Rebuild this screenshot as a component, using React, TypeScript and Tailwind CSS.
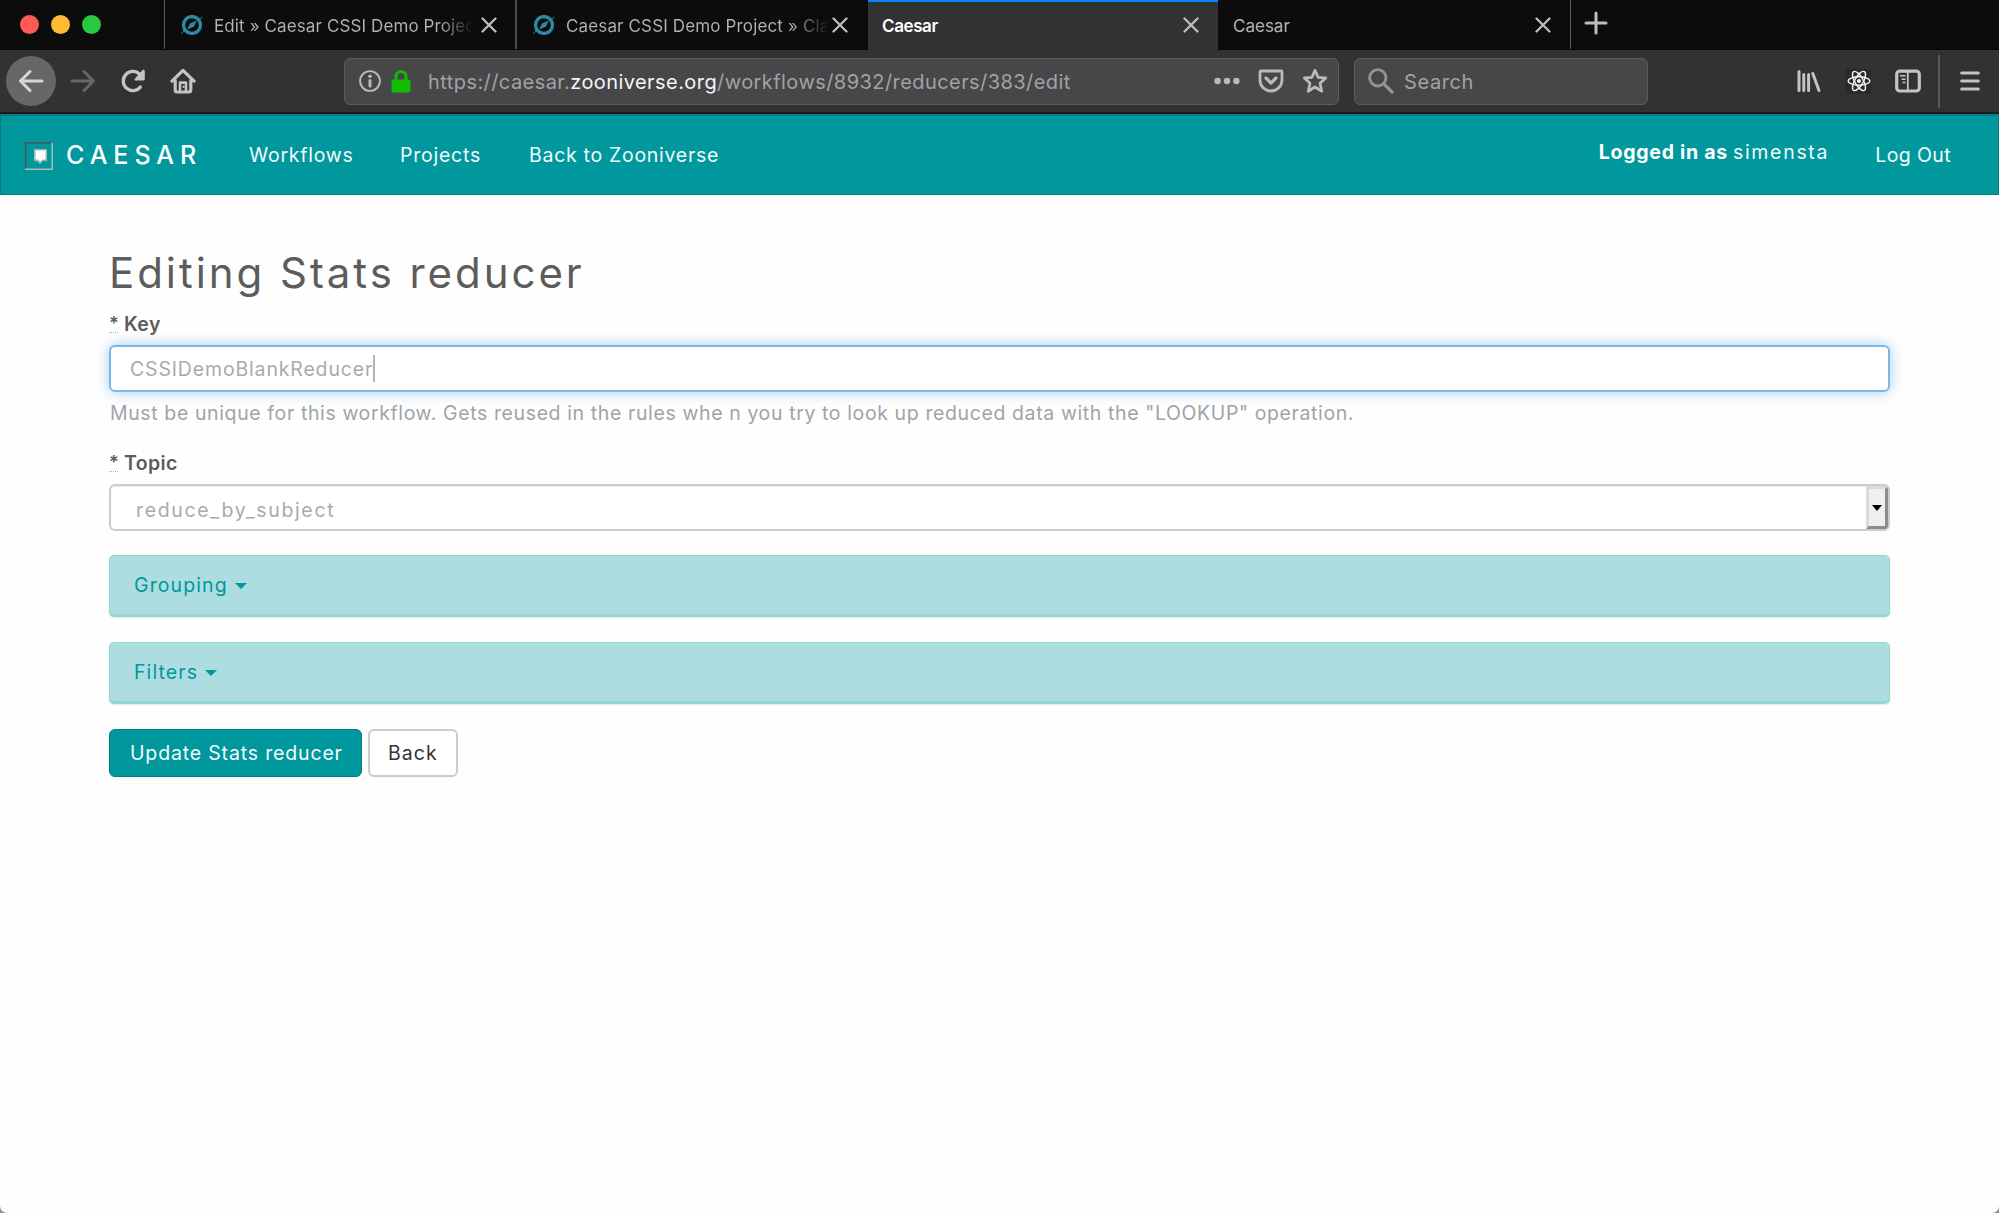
import React from 'react';

const sans = "font-['Inter','Liberation_Sans',sans-serif]";

function Favicon() {
  return (
    <svg width="22" height="22" viewBox="0 0 22 22" className="shrink-0">
      <circle cx="11" cy="11" r="8.5" fill="none" stroke="#2b8ca3" strokeWidth="3.3" />
      <path d="M0.8 19.6 L3 16 M19 5 L21.4 3" stroke="#2b8ca3" strokeWidth="1" />
      <path d="M6 15.5 L9.2 9.2 L16 6.5 L12.8 12.8 Z" fill="#2b8ca3" />
    </svg>
  );
}

function Close() {
  return (
    <svg width="16" height="16" viewBox="0 0 16 16" className="shrink-0">
      <path d="M1.5 1.5 L14.5 14.5 M14.5 1.5 L1.5 14.5" stroke="#bdbdbd" strokeWidth="2.3" strokeLinecap="round" />
    </svg>
  );
}

function TabBar() {
  return (
    <div className="flex h-[50px] items-stretch border-b border-[#060606] bg-[#0c0c0c] text-[17px] leading-[20px]">
      <div className="flex w-[165px] items-start gap-[12px] border-r border-[#5a5a5c] pt-[15px] pl-[20px]">
        <span className="size-[19px] rounded-full bg-[#fe5b54]" />
        <span className="size-[19px] rounded-full bg-[#fdbc30]" />
        <span className="size-[19px] rounded-full bg-[#27c93f]" />
      </div>
      <div className="flex w-[352px] items-center border-r-2 border-[#4c4c4e] pl-[16px]">
        <Favicon />
        <div className="ml-[11px] w-[262px] overflow-hidden whitespace-nowrap bg-[linear-gradient(90deg,#b4b4b4_86%,#0c0c0c_99%)] bg-clip-text pt-[2px] tracking-[0.11px] text-transparent">
          Edit » Caesar CSSI Demo Project
        </div>
        <div className="ml-[5px]"><Close /></div>
      </div>
      <div className="flex w-[351px] items-center pl-[16px]">
        <Favicon />
        <div className="ml-[11px] w-[261px] overflow-hidden whitespace-nowrap bg-[linear-gradient(90deg,#b4b4b4_86%,#0c0c0c_101%)] bg-clip-text pt-[2px] tracking-[0.14px] text-transparent">
          Caesar CSSI Demo Project » Classify
        </div>
        <div className="ml-[5px]"><Close /></div>
      </div>
      <div className="-mb-px flex w-[350px] items-center justify-between border-t-2 border-[#0a84ff] bg-[#323234] pr-[19px] pl-[14px]">
        <span className="font-semibold tracking-[-0.4px] text-white">Caesar</span>
        <div className="pb-[2px]"><Close /></div>
      </div>
      <div className="flex w-[353px] items-center justify-between border-r border-[#5a5a5c] pr-[19px] pl-[15px]">
        <span className="pt-[2px] text-[#b4b4b4]">Caesar</span>
        <Close />
      </div>
      <svg width="24" height="24" viewBox="0 0 24 24" className="mt-[11px] ml-[13px]">
        <path d="M12 2 V22 M2 12 H22" stroke="#bdbdbd" strokeWidth="3" strokeLinecap="round" />
      </svg>
    </div>
  );
}

function Toolbar() {
  return (
    <div className="flex h-[64px] items-center border-b-2 border-[#1c1c1e] bg-[#323234] text-[20px] leading-[24px]">
      <div className="ml-[6px] flex size-[50px] shrink-0 items-center justify-center rounded-full bg-[#676767]">
        <svg width="26" height="24" viewBox="0 0 26 24" fill="none" stroke="#d6d6d6" strokeWidth="3" strokeLinecap="round" strokeLinejoin="round">
          <path d="M24 12 H2.5 M12 2.5 L2.5 12 L12 21.5" />
        </svg>
      </div>
      <svg width="26" height="24" viewBox="0 0 26 24" className="ml-[14px] shrink-0" fill="none" stroke="#67676a" strokeWidth="3" strokeLinecap="round" strokeLinejoin="round">
        <path d="M2 12 H23.5 M14 2.5 L23.5 12 L14 21.5" />
      </svg>
      <svg width="26" height="26" viewBox="0 0 26 26" className="ml-[24px] shrink-0">
        <path d="M20.4 19 A9.6 9.6 0 1 1 19.6 6.2" fill="none" stroke="#c4c4c4" strokeWidth="3.3" strokeLinecap="round" />
        <path d="M22.6 2 Q24.8 1.2 24.8 3.4 V11 Q24.8 12.4 23.4 12.4 H15.6 Q13.6 12.2 15 10.4 Z" fill="#c4c4c4" />
      </svg>
      <svg width="26" height="26" viewBox="0 0 26 26" className="ml-[24px] shrink-0" fill="none" stroke="#c4c4c4" strokeLinecap="round" strokeLinejoin="round">
        <path d="M2 13.2 L13 2.4 L24 13.2" strokeWidth="3.2" />
        <path d="M5.2 12.5 V22 Q5.2 24 7.2 24 H18.8 Q20.8 24 20.8 22 V12.5" strokeWidth="3.2" />
        <path d="M10 24 V14.6 H16 V24" strokeWidth="2.6" />
        <path d="M13.6 18.6 V19" strokeWidth="2" />
      </svg>

      <div className="ml-[148px] flex h-[47px] w-[995px] shrink-0 items-center rounded-[6px] border border-[#5c5c5f] bg-[#474749]">
        <svg width="22" height="22" viewBox="0 0 22 22" className="ml-[14px]">
          <circle cx="11" cy="11" r="9.9" fill="none" stroke="#b9b9ba" strokeWidth="1.9" />
          <circle cx="11" cy="6.2" r="1.8" fill="#b9b9ba" />
          <path d="M11 10.6 V16" stroke="#b9b9ba" strokeWidth="3" strokeLinecap="round" />
        </svg>
        <svg width="20" height="23" viewBox="0 0 20 23" className="ml-[10px]">
          <path d="M5 11 V6.5 A5 5 0 0 1 15 6.5 V11" fill="none" stroke="#12bc00" strokeWidth="3" />
          <rect x="0.5" y="9.5" width="19" height="13" rx="1.8" fill="#12bc00" />
        </svg>
        <div className="ml-[17px] w-[700px] whitespace-nowrap pt-[2px] tracking-[0.43px] text-[#a2a2a3]">
          https://caesar.<span className="text-[#f5f5f5]">zooniverse.org</span>/workflows/8932/reducers/383/edit
        </div>
        <svg width="26" height="8" viewBox="0 0 26 8" className="ml-[86px]" fill="#bababb">
          <circle cx="3.6" cy="4" r="3.2" /><circle cx="13" cy="4" r="3.2" /><circle cx="22.4" cy="4" r="3.2" />
        </svg>
        <svg width="26" height="24" viewBox="0 0 26 24" className="ml-[18px]" fill="none" stroke="#bababb" strokeWidth="2.8" strokeLinecap="round" strokeLinejoin="round">
          <path d="M3 2 H23 Q24 2 24 3 V11 A11 11 0 0 1 2 11 V3 Q2 2 3 2 Z" />
          <path d="M8 9 L13 14 L18 9" strokeWidth="3.2" />
        </svg>
        <svg width="26" height="26" viewBox="0 0 26 26" className="ml-[18px]" fill="none" stroke="#bababb" strokeWidth="2.8" strokeLinejoin="round">
          <path d="M13 2.4 L16.1 9.3 L23.7 10 L18 15.2 L19.8 23.2 L13 19 L6.2 23.2 L8 15.2 L2.3 10 L9.9 9.3 Z" />
        </svg>
      </div>

      <div className="ml-[15px] flex h-[47px] w-[294px] shrink-0 items-center rounded-[6px] border border-[#5c5c5f] bg-[#474749]">
        <svg width="26" height="26" viewBox="0 0 26 26" className="ml-[13px]" fill="none" stroke="#949495" strokeLinecap="round">
          <circle cx="9.8" cy="9.8" r="8.2" strokeWidth="2.8" />
          <path d="M16.4 16.4 L24 24" strokeWidth="3.2" />
        </svg>
        <span className="ml-[10px] pt-[2px] tracking-[0.6px] text-[#a2a2a3]">Search</span>
      </div>

      <svg width="24" height="24" viewBox="0 0 24 24" className="ml-[149px] shrink-0" stroke="#c4c4c4" strokeWidth="3" strokeLinecap="round">
        <path d="M2 2.5 V21.5 M6.8 5.5 V21.5 M11.6 5.5 V21.5 M15.8 4.5 L22 21.5" />
      </svg>
      <div className="ml-[25px] flex size-[25px] shrink-0 items-center justify-center bg-[#29292b]">
        <svg width="24" height="24" viewBox="0 0 24 24" fill="none" stroke="#f2f2f2" strokeWidth="1.4">
          <ellipse cx="12" cy="12" rx="10.8" ry="4.2" />
          <ellipse cx="12" cy="12" rx="10.8" ry="4.2" transform="rotate(60 12 12)" />
          <ellipse cx="12" cy="12" rx="10.8" ry="4.2" transform="rotate(120 12 12)" />
          <circle cx="12" cy="12" r="2.1" fill="#f2f2f2" stroke="none" />
        </svg>
      </div>
      <svg width="26" height="24" viewBox="0 0 26 24" className="ml-[24px] shrink-0" fill="none" stroke="#c4c4c4">
        <rect x="1.7" y="2.2" width="22.6" height="19.8" rx="3" strokeWidth="3.2" />
        <path d="M12.8 2.5 V21.5" strokeWidth="1.8" />
        <path d="M5 6.7 H10.5 M6.5 10.2 H10.5 M7.5 13.6 H10.5" strokeWidth="1.5" />
      </svg>
      <div className="ml-[17px] h-[53px] w-[2px] bg-[#5a5a5c]" />
      <svg width="20" height="22" viewBox="0 0 20 22" className="ml-[20px] shrink-0" stroke="#c4c4c4" strokeWidth="3.1" strokeLinecap="round">
        <path d="M1.7 3 H18.3 M1.7 11 H18.3 M1.7 19 H18.3" />
      </svg>
    </div>
  );
}

function SiteNav() {
  return (
    <nav className="flex h-[81px] items-start border border-t-2 border-[#067c82] bg-[#00979d] leading-[24px] whitespace-nowrap text-[#f2fbfb]">
      <svg width="28" height="28" viewBox="0 0 28 28" className="mt-[26px] ml-[24px]">
        <path d="M0.7 28 V0.7 H28" fill="none" stroke="#4f5558" strokeWidth="1.4" />
        <path d="M0 27.2 H27.2 V0.5" fill="none" stroke="#b5b8ba" strokeWidth="1.5" />
        <path d="M9 7 H22 V20 L20 18.5 L17.5 19.5 L15 22 L12.5 19.5 L9 19 Z" fill="#9fb9bb" />
        <path d="M10.5 8.5 H20.5 V17.5 H17.5 L15.3 19.5 L13 17.5 H10.5 Z" fill="#fff" />
      </svg>
      <div className="mt-[23px] ml-[13px] w-[183px] text-[25px] leading-[32px] font-medium tracking-[5.93px] text-white">CAESAR</div>
      <a className="mt-[27px] w-[151px] tracking-[0.75px]">Workflows</a>
      <a className="mt-[27px] w-[129px] tracking-[0.77px]">Projects</a>
      <a className="mt-[27px] tracking-[0.71px]">Back to Zooniverse</a>
      <div className="mt-[24px] mr-[46px] ml-auto">
        <b className="tracking-[0.72px] text-white">Logged in as</b>
        <span className="ml-[5px] tracking-[1.7px]">simensta</span>
      </div>
      <a className="mt-[27px] mr-[47px] tracking-[0.4px]">Log Out</a>
    </nav>
  );
}

function Label({ text }: { text: string }) {
  return (
    <label className="flex leading-[24px] font-semibold tracking-[0.4px] text-[#5c5c5c]">
      <abbr className="h-[21px] w-[9px] border-b border-dotted border-[#b0b0b0] text-[18px] no-underline">*</abbr>
      <span className="ml-[6px]">{text}</span>
    </label>
  );
}

function Caret() {
  return (
    <svg width="12" height="6" viewBox="0 0 12 6" className="mt-[2px] ml-[7px]">
      <path d="M0 0 H12 L6 6 Z" fill="#00979d" />
    </svg>
  );
}

function Panel({ title }: { title: string }) {
  return (
    <div className="flex h-[62px] items-center rounded-[5px] border border-b-[3px] border-[#92d8cf] bg-[#addde0] pl-[24px] leading-[24px] text-[#00979d] shadow-[0_1px_2px_rgba(0,0,0,0.1)]">
      <span className="tracking-[1.1px]">{title}</span>
      <Caret />
    </div>
  );
}

export default function App() {
  return (
    <div className={`flex h-[1213px] w-[1999px] flex-col overflow-hidden bg-[#8c8c8c] ${sans}`}>
      <div className="shrink-0">
        <TabBar />
        <Toolbar />
      </div>
      <div className="flex grow flex-col rounded-b-[7px] bg-[#fefefe] text-[19.5px]">
        <SiteNav />
        <main className="flex flex-col px-[109px]">
          <h1 className="mt-[53px] text-[42px] leading-[50px] tracking-[2.95px] text-[#5c5c5c]">Editing Stats reducer</h1>
          <div className="mt-[14px] h-[24px]"><Label text="Key" /></div>
          <div className="mt-[9px] flex h-[47px] items-center rounded-[6px] border-2 border-[#7ab8ea] bg-white pl-[19px] leading-[24px] text-[#aaaaaa] shadow-[0_0_14px_rgba(102,175,233,0.6)]">
            <span className="tracking-[0.84px]">CSSIDemoBlankReducer</span>
            <span className="h-[27px] w-[2px] bg-[#b4b4b4]" />
          </div>
          <p className="mt-[9px] pl-px leading-[24px] tracking-[0.61px] whitespace-nowrap text-[#a3a3a3]">
            Must be unique for this workflow. Gets reused in the rules whe n you try to look up reduced data with the "LOOKUP" operation.
          </p>
          <div className="mt-[26px] h-[24px]"><Label text="Topic" /></div>
          <div className="mt-[9px] flex h-[47px] items-stretch justify-between overflow-hidden rounded-[6px] border-2 border-[#cbcbcb] bg-white pl-[25px] leading-[24px] text-[#aaaaaa] shadow-[inset_0_1px_1px_rgba(0,0,0,0.08)]">
            <span className="pt-[12px] tracking-[1.65px]">reduce_by_subject</span>
            <div className="flex w-[22px] items-center justify-center border-3 border-t-[#dadada] border-r-[#8c8c8c] border-b-[#8c8c8c] border-l-[#dadada] bg-[#efefef]">
              <svg width="10" height="6" viewBox="0 0 10 6"><path d="M0 0 H10 L5 6 Z" fill="#000" /></svg>
            </div>
          </div>
          <div className="mt-[24px] flex flex-col gap-[25px]">
            <Panel title="Grouping" />
            <Panel title="Filters" />
          </div>
          <div className="mt-[25px] flex gap-[6px] leading-[24px]">
            <button className="flex h-[48px] w-[253px] items-center rounded-[6px] border border-[#067c82] bg-[#00979d] pl-[20px] tracking-[0.84px] text-[#f2fbfb]">Update Stats reducer</button>
            <button className="flex h-[48px] w-[90px] items-center rounded-[6px] border-2 border-[#cbcbcb] bg-white pl-[18px] tracking-[1.05px] text-[#333]">Back</button>
          </div>
        </main>
      </div>
    </div>
  );
}
